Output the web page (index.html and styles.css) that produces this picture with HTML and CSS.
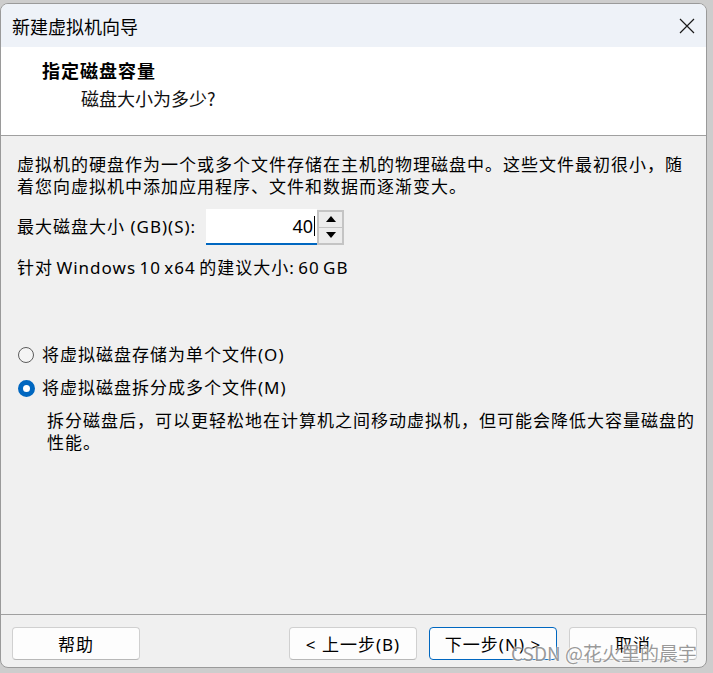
FILE: index.html
```html
<!DOCTYPE html>
<html lang="zh-CN">
<head>
<meta charset="utf-8">
<title>新建虚拟机向导</title>
<link rel="stylesheet" href="styles.css">
</head>
<body>
<div class="window">
  <div class="titlebar">
    <span class="title">新建虚拟机向导</span>
    <svg class="close" width="16" height="16" viewBox="0 0 16 16"><path d="M1 1 L15 15 M15 1 L1 15" stroke="#1a1a1a" stroke-width="1.2" fill="none"/></svg>
  </div>
  <div class="header">
    <div class="h-title">指定磁盘容量</div>
    <div class="h-sub">磁盘大小为多少?</div>
  </div>
  <div class="content">
    <p class="para">虚拟机的硬盘作为一个或多个文件存储在主机的物理磁盘中。这些文件最初很小，随着您向虚拟机中添加应用程序、文件和数据而逐渐变大。</p>
    <div class="size-row">
      <span class="label">最大磁盘大小 (GB)(S):</span>
      <div class="input"><span class="value">40</span><span class="caret"></span></div>
      <div class="spinner">
        <div class="spin-btn"><svg width="10" height="6" viewBox="0 0 10 6"><polygon points="5,0 10,6 0,6" fill="#000"/></svg></div>
        <div class="spin-btn"><svg width="10" height="6" viewBox="0 0 10 6"><polygon points="0,0 10,0 5,6" fill="#000"/></svg></div>
      </div>
    </div>
    <div class="recommend">针对 Windows 10 x64 的建议大小: 60 GB</div>
    <div class="radio-row first"><span class="radio"></span><span>将虚拟磁盘存储为单个文件(O)</span></div>
    <div class="radio-row"><span class="radio checked"></span><span>将虚拟磁盘拆分成多个文件(M)</span></div>
    <p class="desc">拆分磁盘后，可以更轻松地在计算机之间移动虚拟机，但可能会降低大容量磁盘的性能。</p>
  </div>
  <div class="footer">
    <button class="btn help">帮助</button>
    <div class="spacer"></div>
    <button class="btn">&lt; 上一步(B)</button>
    <button class="btn default">下一步(N) &gt;</button>
    <button class="btn">取消</button>
  </div>
  <div class="watermark">CSDN @花火里的晨宇</div>
</div>
</body>
</html>
```
FILE: styles.css
```css
html, body {
  margin: 0;
  padding: 0;
}
body {
  background: #cdcdcd;
  width: 713px;
  height: 673px;
  padding-top: 3px;
  box-sizing: border-box;
  font-family: "Noto Sans", "Noto Sans CJK SC", sans-serif;
  color: #000;
}
.window {
  position: relative;
  width: 707px;
  height: 665px;
  box-sizing: border-box;
  border: 1px solid #9a9a9a;
  border-radius: 8px;
  background: #f0f0f0;
  overflow: hidden;
  display: flex;
  flex-direction: column;
}
.titlebar {
  height: 43px;
  background: #eef2f8;
  display: flex;
  align-items: center;
  padding: 0 11px 0 11px;
  flex: none;
}
.title {
  font-family: "Noto Sans CJK SC", sans-serif;
  font-size: 18px;
  flex: 1;
}
.close {
  margin-right: 0;
}
.header {
  height: 89px;
  background: #fff;
  border-bottom: 1px solid #a0a0a0;
  flex: none;
  box-sizing: border-box;
  padding-top: 11px;
}
.h-title {
  font-family: "Noto Sans CJK SC", sans-serif;
  font-weight: bold;
  font-size: 18px;
  line-height: 24px;
  letter-spacing: 1px;
  margin-left: 41px;
}
.h-sub {
  font-family: "Noto Sans CJK SC", sans-serif;
  font-size: 18px;
  line-height: 24px;
  margin-left: 80px;
  margin-top: 4px;
  color: #111;
}
.content {
  flex: 1;
  padding: 18px 8px 0 16px;
  font-size: 17px;
  line-height: 22px;
  letter-spacing: 1px;
  word-spacing: -2px;
}
.para {
  margin: 0;
}
.size-row {
  display: flex;
  align-items: center;
  height: 36px;
  margin-top: 11px;
}
.label {
  margin-right: 10px;
  word-spacing: 0;
}
.input {
  width: 111px;
  height: 36px;
  box-sizing: border-box;
  background: #fff;
  border-bottom: 2px solid #0067c0;
  display: flex;
  align-items: center;
  justify-content: flex-end;
  padding-right: 2px;
  letter-spacing: 0;
}
.value {
  font-size: 18px;
}
.caret {
  width: 1px;
  height: 20px;
  background: #000;
  margin-left: 1px;
}
.spinner {
  width: 27px;
  height: 35px;
  box-sizing: border-box;
  border: 2px solid #c4c4c4;
  display: flex;
  flex-direction: column;
  background: #c4c4c4;
  gap: 1px;
}
.spin-btn {
  flex: 1;
  background: #ececec;
  display: flex;
  align-items: center;
  justify-content: center;
}
.recommend {
  margin-top: 12px;
}
.radio-row {
  display: flex;
  align-items: center;
  margin-top: 11px;
}
.radio-row.first {
  margin-top: 65px;
}
.radio {
  width: 16px;
  height: 16px;
  box-sizing: border-box;
  border-radius: 50%;
  border: 1px solid #5c5c5c;
  background: #f4f4f4;
  margin-left: 1px;
  margin-right: 8px;
}
.radio.checked {
  width: 17px;
  height: 17px;
  border: 5px solid #0067c0;
  background: #fff;
  margin-right: 7px;
}
.desc {
  margin: 11px 0 0 30px;
}
.footer {
  flex: none;
  height: 53px;
  box-sizing: border-box;
  border-top: 1px solid #a0a0a0;
  display: flex;
  align-items: flex-start;
  padding: 12px 9px 0 11px;
  gap: 12px;
}
.spacer {
  flex: 1;
}
.btn {
  width: 128px;
  height: 33px;
  box-sizing: border-box;
  border: 1px solid #d0d0d0;
  border-bottom-color: #b8b8b8;
  border-radius: 4px;
  background: #fdfdfd;
  font-family: "Noto Sans", "Noto Sans CJK SC", sans-serif;
  font-size: 17px;
  letter-spacing: 1px;
  color: #000;
  padding: 0;
}
.btn.default {
  border: 1px solid #0067c0;
}
.watermark {
  position: absolute;
  right: 9px;
  bottom: 1px;
  font-family: "Noto Sans CJK SC", sans-serif;
  font-size: 19px;
  color: rgba(120, 120, 120, 0.75);
  text-shadow: 0 0 2px #fff, 0 0 2px #fff;
  letter-spacing: 0;
}
```
